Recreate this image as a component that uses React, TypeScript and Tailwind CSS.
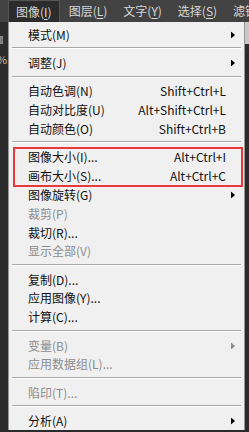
import { ReactNode } from 'react'

type Item = {
  label: string
  shortcut?: string
  sub?: boolean
  disabled?: boolean
}

const groups: Item[][] = [
  [{ label: '模式(M)', sub: true }],
  [{ label: '调整(J)', sub: true }],
  [
    { label: '自动色调(N)', shortcut: 'Shift+Ctrl+L' },
    { label: '自动对比度(U)', shortcut: 'Alt+Shift+Ctrl+L' },
    { label: '自动颜色(O)', shortcut: 'Shift+Ctrl+B' },
  ],
  [
    { label: '图像大小(I)...', shortcut: 'Alt+Ctrl+I' },
    { label: '画布大小(S)...', shortcut: 'Alt+Ctrl+C' },
    { label: '图像旋转(G)', sub: true },
    { label: '裁剪(P)', disabled: true },
    { label: '裁切(R)...' },
    { label: '显示全部(V)', disabled: true },
  ],
  [
    { label: '复制(D)...' },
    { label: '应用图像(Y)...' },
    { label: '计算(C)...' },
  ],
  [
    { label: '变量(B)', sub: true, disabled: true },
    { label: '应用数据组(L)...', disabled: true },
  ],
  [{ label: '陷印(T)...', disabled: true }],
  [{ label: '分析(A)', sub: true }],
]

function Arrow({ disabled }: { disabled?: boolean }) {
  return (
    <svg width="4" height="7" viewBox="0 0 4 7" className="absolute right-[9px] top-1/2 -translate-y-1/2">
      <path d="M0 0 L4 3.5 L0 7 Z" fill={disabled ? '#8c8c8c' : '#000'} />
    </svg>
  )
}

function Row({ item }: { item: Item }) {
  return (
    <div
      className={`relative flex items-center h-[18.8px] pl-[19px] pr-[18px] ${
        item.disabled ? 'text-[#8d8d8d]' : 'text-[#111]'
      }`}
    >
      <span className="flex-1 whitespace-nowrap">{item.label}</span>
      {item.shortcut && <span className="whitespace-nowrap">{item.shortcut}</span>}
      {item.sub && <Arrow disabled={item.disabled} />}
    </div>
  )
}

function Separator() {
  return (
    <div className="h-[9.5px] pt-[3px] px-[3px]">
      <div className="h-px bg-[#a8a8a8]" />
      <div className="h-px bg-white" />
    </div>
  )
}

function TopItem({ children, active }: { children: ReactNode; active?: boolean }) {
  return (
    <div
      className={`h-full flex items-center px-[7px] whitespace-nowrap ${
        active ? 'bg-[#2c2c2c] border border-b-0 border-[#555]' : ''
      }`}
    >
      {children}
    </div>
  )
}

export default function App() {
  const highlighted = groups[3].slice(0, 2)
  const rest = groups[3].slice(2)

  return (
    <div
      className="w-[249px] h-[432px] overflow-hidden bg-[#2b2b2b] text-[12px] leading-none"
      style={{ fontFamily: '"Noto Sans CJK SC", "Microsoft YaHei", sans-serif' }}
    >
      {/* menu bar */}
      <div className="h-[22px] bg-[#424242] flex items-stretch pl-[8px] gap-[2px] text-[#d8d8d8] text-[12px]">
        <TopItem active>
          图像(<span className="underline underline-offset-2">I</span>)
        </TopItem>
        <TopItem>
          图层(<span className="underline underline-offset-2">L</span>)
        </TopItem>
        <TopItem>
          文字(<span className="underline underline-offset-2">Y</span>)
        </TopItem>
        <TopItem>
          选择(<span className="underline underline-offset-2">S</span>)
        </TopItem>
        <TopItem>滤镜</TopItem>
      </div>

      <div className="flex">
        {/* left strip */}
        <div className="w-[8px] shrink-0 flex flex-col">
          <div className="mt-[14px] h-[8px] w-[3px] bg-[#6e6e6e] border border-[#8a8a8a]" />
          <div className="mt-[10px] -ml-[3px] text-[#bdbdbd] text-[11px]">%</div>
        </div>

        {/* dropdown */}
        <div className="w-[237px] shrink-0 bg-[#f0f0f0] border-l border-r border-[#979797] pt-[3.5px]">
          {groups.map((g, gi) => (
            <div key={gi}>
              {gi > 0 && <Separator />}
              {gi === 3 ? (
                <>
                  <div className="relative">
                    {highlighted.map((it) => (
                      <Row key={it.label} item={it} />
                    ))}
                    <div className="absolute left-[4px] right-[1px] -top-[0.5px] -bottom-[1px] border-2 border-[#e8393c] pointer-events-none" />
                  </div>
                  {rest.map((it) => (
                    <Row key={it.label} item={it} />
                  ))}
                </>
              ) : (
                g.map((it) => <Row key={it.label} item={it} />)
              )}
            </div>
          ))}
        </div>

        {/* right strip */}
        <div className="flex-1 flex flex-col">
          <div className="h-[22px] bg-[#c8c8c8]" />
        </div>
      </div>
    </div>
  )
}
